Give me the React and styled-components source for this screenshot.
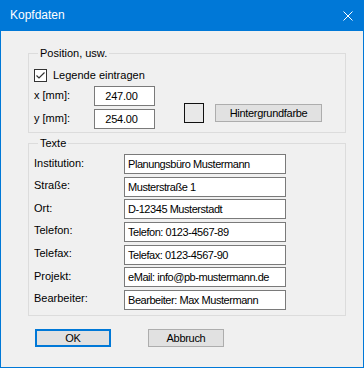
import React, { useState } from "react";
import styled, { createGlobalStyle } from "styled-components";

const GlobalStyle = createGlobalStyle`
  html, body {
    margin: 0;
    padding: 0;
    background: #f0f0f0;
  }
  body {
    font-family: "Liberation Sans", Arial, sans-serif;
    font-size: 11px;
    color: #000;
  }
`;

const fields = [
  { label: "Institution:", value: "Planungsbüro Mustermann" },
  { label: "Straße:", value: "Musterstraße 1" },
  { label: "Ort:", value: "D-12345 Musterstadt" },
  { label: "Telefon:", value: "Telefon: 0123-4567-89" },
  { label: "Telefax:", value: "Telefax: 0123-4567-90" },
  { label: "Projekt:", value: "eMail: info@pb-mustermann.de" },
  { label: "Bearbeiter:", value: "Bearbeiter: Max Mustermann" },
];

export default function App() {
  const [legend, setLegend] = useState(true);

  return (
    <>
      <GlobalStyle />
      <Window>
        <TitleBar>
          <Title>Kopfdaten</Title>
          <CloseIcon viewBox="0 0 10 10">
            <path d="M0.5 0.5 L9.5 9.5 M9.5 0.5 L0.5 9.5" />
          </CloseIcon>
        </TitleBar>
        <Body>
          <Group $top={15}>
            <Legend>Position, usw.</Legend>
            <PositionLayout>
              <Column>
                <CheckRow onClick={() => setLegend(!legend)}>
                  <CheckBox>
                    {legend && (
                      <svg viewBox="0 0 11 11" width="11" height="11">
                        <path d="M1.5 5.5 L4 8 L9.5 2.5" fill="none" stroke="#333" strokeWidth="1.2" />
                      </svg>
                    )}
                  </CheckBox>
                  Legende eintragen
                </CheckRow>
                <CoordRow>
                  <CoordLabel>x [mm]:</CoordLabel>
                  <NumberBox>247.00</NumberBox>
                </CoordRow>
                <CoordRow>
                  <CoordLabel>y [mm]:</CoordLabel>
                  <NumberBox>254.00</NumberBox>
                </CoordRow>
              </Column>
              <ColorPicker>
                <Swatch />
                <Button $width={107} $height={18}>Hintergrundfarbe</Button>
              </ColorPicker>
            </PositionLayout>
          </Group>

          <Group $top={3}>
            <Legend>Texte</Legend>
            <TextList>
              {fields.map((f) => (
                <TextRow key={f.label}>
                  <TextLabel>{f.label}</TextLabel>
                  <TextBox>{f.value}</TextBox>
                </TextRow>
              ))}
            </TextList>
          </Group>

          <ButtonBar>
            <Button $width={76} $height={18} $default>OK</Button>
            <Button $width={76} $height={18}>Abbruch</Button>
          </ButtonBar>
        </Body>
      </Window>
    </>
  );
}

const Window = styled.div`
  width: 364px;
  height: 368px;
  box-sizing: border-box;
  border: 1px solid #0078d7;
  border-top: none;
  background: #f0f0f0;
  display: flex;
  flex-direction: column;
`;

const TitleBar = styled.div`
  height: 31px;
  margin: 0 -1px;
  background: #0078d7;
  display: flex;
  align-items: center;
  justify-content: space-between;
  padding: 0 11px 0 10px;
  color: #fff;
`;

const Title = styled.span`
  font-size: 12px;
  margin-top: -1px;
`;

const CloseIcon = styled.svg`
  width: 10px;
  height: 10px;
  stroke: #fff;
  stroke-width: 1;
  fill: none;
`;

const Body = styled.div`
  padding-left: 27px;
  display: flex;
  flex-direction: column;
`;

const Group = styled.fieldset`
  width: 318px;
  box-sizing: border-box;
  margin: ${(p) => p.$top}px 0 0 0;
  padding: 0;
  min-width: 0;
  border: 1px solid #dcdcdc;
`;

const Legend = styled.legend`
  margin-left: 9px;
  padding: 0 2px;
  line-height: 14px;
  font-size: 11px;
`;

const PositionLayout = styled.div`
  display: flex;
  padding: 8px 0 3px 5px;
`;

const Column = styled.div`
  display: flex;
  flex-direction: column;
  gap: 4px;
`;

const CheckRow = styled.label`
  display: flex;
  align-items: center;
  gap: 6px;
  height: 14px;
  cursor: default;
`;

const CheckBox = styled.span`
  width: 13px;
  height: 13px;
  box-sizing: border-box;
  border: 1px solid #333;
  background: #fff;
  display: flex;
  align-items: center;
  justify-content: center;
`;

const CoordRow = styled.div`
  display: flex;
  align-items: center;
  & + & {
    margin-top: -1px;
  }
`;

const CoordLabel = styled.span`
  width: 60px;
  padding-bottom: 2px;
`;

const NumberBox = styled.div`
  width: 61px;
  height: 20px;
  box-sizing: border-box;
  border: 1px solid #7a7a7a;
  background: #fff;
  padding-right: 6px;
  letter-spacing: -0.2px;
  display: flex;
  align-items: center;
  justify-content: center;
`;

const ColorPicker = styled.div`
  align-self: flex-end;
  display: flex;
  align-items: center;
  gap: 11px;
  margin: 0 0 6px 29px;
`;

const Swatch = styled.div`
  width: 20px;
  height: 20px;
  box-sizing: border-box;
  border: 1px solid #111;
  background: #e8e8e8;
`;

const Button = styled.button`
  width: ${(p) => p.$width}px;
  height: ${(p) => p.$height}px;
  box-sizing: border-box;
  padding: 0;
  font-family: "Liberation Sans", Arial, sans-serif;
  font-size: 11px;
  letter-spacing: -0.3px;
  color: #000;
  background: #e1e1e1;
  border: ${(p) => (p.$default ? "2px solid #0078d7" : "1px solid #adadad")};
`;

const TextList = styled.div`
  display: flex;
  flex-direction: column;
  gap: 2.67px;
  padding: 4px 0 5px 5px;
`;

const TextRow = styled.div`
  display: flex;
  align-items: center;
`;

const TextLabel = styled.span`
  width: 90px;
  padding-bottom: 3px;
`;

const TextBox = styled.div`
  width: 162px;
  height: 20px;
  box-sizing: border-box;
  border: 1px solid #7a7a7a;
  background: #fff;
  padding-left: 3px;
  letter-spacing: -0.45px;
  display: flex;
  align-items: center;
  white-space: nowrap;
  overflow: hidden;
`;

const ButtonBar = styled.div`
  display: flex;
  gap: 37px;
  margin-top: 13px;
  padding-left: 7px;
`;
